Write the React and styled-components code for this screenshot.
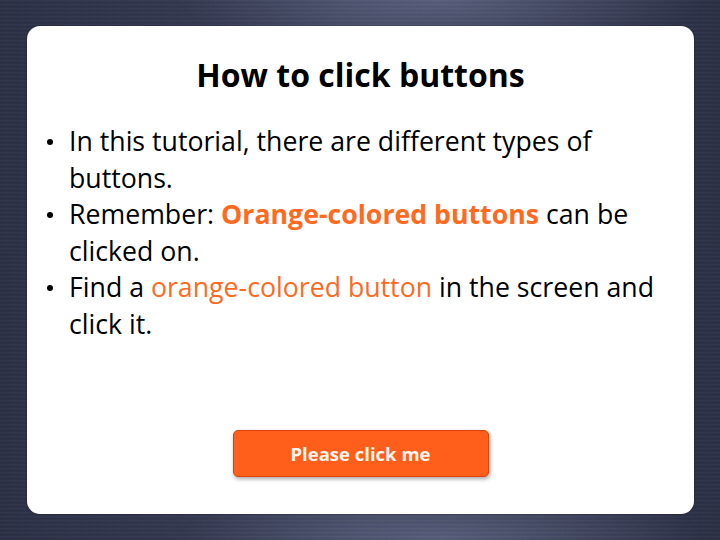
import React from "react";
import styled, { createGlobalStyle } from "styled-components";

const GlobalStyle = createGlobalStyle`
    html, body {
        margin: 0;
        padding: 0;
    }
    body {
        font-family: "Open Sans", "Noto Sans", sans-serif;
    }
`;

const App = () => {
    return (
        <>
            <GlobalStyle />
            <StageStyle>
                <CardStyle>
                    <TitleStyle>How to click buttons</TitleStyle>
                    <ListStyle>
                        <ItemStyle>In this tutorial, there are different types of buttons.</ItemStyle>
                        <ItemStyle>
                            Remember: <StrongOrange>Orange-colored buttons</StrongOrange> can be clicked on.
                        </ItemStyle>
                        <ItemStyle>
                            Find a <Orange>orange-colored button</Orange> in the screen and click it.
                        </ItemStyle>
                    </ListStyle>
                    <ButtonRowStyle>
                        <ButtonStyle>Please click me</ButtonStyle>
                    </ButtonRowStyle>
                </CardStyle>
            </StageStyle>
        </>
    );
};

export default App;

// ==========================================   STYLES   ========================================== //

const StageStyle = styled.div`
    width: 720px;
    height: 540px;
    box-sizing: border-box;
    padding: 26px 26px 26px 27px;
    background:
        repeating-linear-gradient(
            180deg,
            rgba(255, 255, 255, 0.03) 0px,
            rgba(255, 255, 255, 0.03) 1px,
            rgba(0, 0, 0, 0.04) 2px,
            rgba(0, 0, 0, 0) 4px
        ),
        radial-gradient(ellipse 260px 60px at 440px 0px, rgba(120, 128, 160, 0.5), rgba(120, 128, 160, 0) 100%),
        radial-gradient(ellipse 260px 60px at 440px 540px, rgba(120, 128, 160, 0.5), rgba(120, 128, 160, 0) 100%),
        linear-gradient(90deg, #2c3046 0%, #3a3f58 50%, #2c3046 100%);
`;

const CardStyle = styled.div`
    height: 100%;
    background: #ffffff;
    border-radius: 13px;
    display: flex;
    flex-direction: column;
    box-shadow: 0 0 2px rgba(0, 0, 0, 0.4);
`;

const TitleStyle = styled.h1`
    margin: 28px 0 0;
    text-align: center;
    font-size: 32px;
    font-weight: 700;
    color: #000;
    line-height: 42px;
`;

const ListStyle = styled.ul`
    margin: 27px 0 0;
    padding: 0 30px 0 42px;
    list-style: none;
`;

const ItemStyle = styled.li`
    position: relative;
    font-size: 26.7px;
    line-height: 36.5px;
    color: #000;

    &::before {
        content: "";
        position: absolute;
        left: -22px;
        top: 16px;
        width: 6px;
        height: 6px;
        border-radius: 50%;
        background: #000;
    }
`;

const Orange = styled.span`
    color: #ff6a1f;
`;

const StrongOrange = styled(Orange)`
    font-weight: 700;
`;

const ButtonRowStyle = styled.div`
    margin-top: auto;
    margin-bottom: 37px;
    display: flex;
    justify-content: center;
`;

const ButtonStyle = styled.button`
    width: 256px;
    height: 47px;
    box-sizing: border-box;
    background: #ff5f1a;
    border: 1px solid #e0400a;
    border-radius: 5px;
    box-shadow: 1px 2px 4px rgba(0, 0, 0, 0.35);
    color: #fff5ee;
    font-family: "Open Sans", "Noto Sans", sans-serif;
    font-size: 18.5px;
    font-weight: 700;
    cursor: pointer;
`;
